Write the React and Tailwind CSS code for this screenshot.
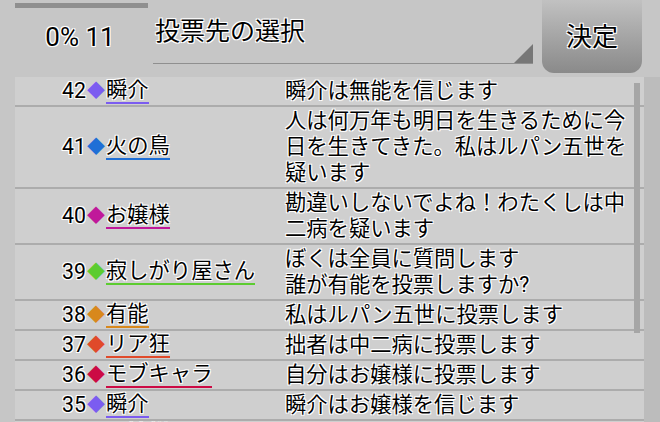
import React from "react";

const rows = [
  { n: 42, name: "瞬介", c: "#7b5cf0", text: ["瞬介は無能を信じます"] },
  { n: 41, name: "火の鳥", c: "#1f6fd6", text: ["人は何万年も明日を生きるために今", "日を生きてきた。私はルパン五世を", "疑います"] },
  { n: 40, name: "お嬢様", c: "#c0189a", text: ["勘違いしないでよね！わたくしは中", "二病を疑います"] },
  { n: 39, name: "寂しがり屋さん", c: "#5ccc30", text: ["ぼくは全員に質問します", "誰が有能を投票しますか?"] },
  { n: 38, name: "有能", c: "#d8881c", text: ["私はルパン五世に投票します"] },
  { n: 37, name: "リア狂", c: "#e04a2a", text: ["拙者は中二病に投票します"] },
  { n: 36, name: "モブキャラ", c: "#cc0a44", text: ["自分はお嬢様に投票します"] },
  { n: 35, name: "瞬介", c: "#7b5cf0", text: ["瞬介はお嬢様を信じます"] },
  { n: 34, name: "お嬢様", c: "#c0189a", text: ["わたくしは有能に投票しますわ"] },
];

const outline =
  "[text-shadow:-1px_-1px_0_#fff,1px_-1px_0_#fff,-1px_1px_0_#fff,1px_1px_0_#fff,0_0_2px_#fff]";

export default function App() {
  return (
    <div
      className="w-[660px] h-[422px] overflow-hidden bg-[#c6c6c6] text-black"
      style={{ fontFamily: 'Roboto, "Noto Sans CJK JP", sans-serif' }}
    >
      {/* header */}
      <div className="flex h-[77px]">
        <div className="w-[153px] flex flex-col">
          <div className="ml-[15px] mt-[3px] w-[133px] h-[5px] bg-[#8f8f8f]" />
          <div className={`mt-[14px] text-center text-[26px] leading-[30px] pl-[7px] ${outline}`}>0% 11</div>
        </div>
        <div className="w-[380px] h-[64px] relative border-b border-[#8f8f8f]">
          <div className={`pl-[2px] pt-[17px] text-[25px] leading-[30px] ${outline}`}>投票先の選択</div>
          <svg className="absolute right-0 bottom-0" width="19" height="19" viewBox="0 0 19 19">
            <polygon points="0,19 19,0 19,19" fill="#777777" />
          </svg>
        </div>
        <div className="ml-[9px] w-[100px] h-[83px] -mt-[10px] rounded-b-[12px] bg-gradient-to-b from-[#c9c9c9] to-[#8a8a8a] flex items-center justify-center pt-[10px]">
          <span className={`text-[26px] leading-[30px] ${outline}`}>決定</span>
        </div>
      </div>

      {/* list */}
      <div className="flex">
        <div className="ml-[15px] w-[629px] bg-[#cfcfcf] relative">
          {rows.map((r, i) => (
            <div key={i} className="flex items-center border-b-2 border-[#acacac]">
              <div className="w-[270px] pl-[47px] py-[1px] flex items-center text-[21.3px]">
                <span className={`leading-[26px] ${outline}`}>{r.n}</span>
                <span className="text-[18px] leading-[26px] mx-[1px]" style={{ color: r.c }}>◆</span>
                <span
                  className={`leading-[24px] border-b-2 whitespace-nowrap ${outline}`}
                  style={{ borderColor: r.c }}
                >
                  {r.name}
                </span>
              </div>
              <div className={`flex-1 py-[1px] text-[21.3px] leading-[26px] whitespace-nowrap ${outline}`}>
                {r.text.map((t, j) => (
                  <div key={j}>{t}</div>
                ))}
              </div>
            </div>
          ))}
          <div className="absolute right-[4px] top-[6px] w-[6px] h-[250px] bg-[#a6a6a6]" />
        </div>
        <div className="flex-1 bg-[#bcbcbc]" />
      </div>
    </div>
  );
}
